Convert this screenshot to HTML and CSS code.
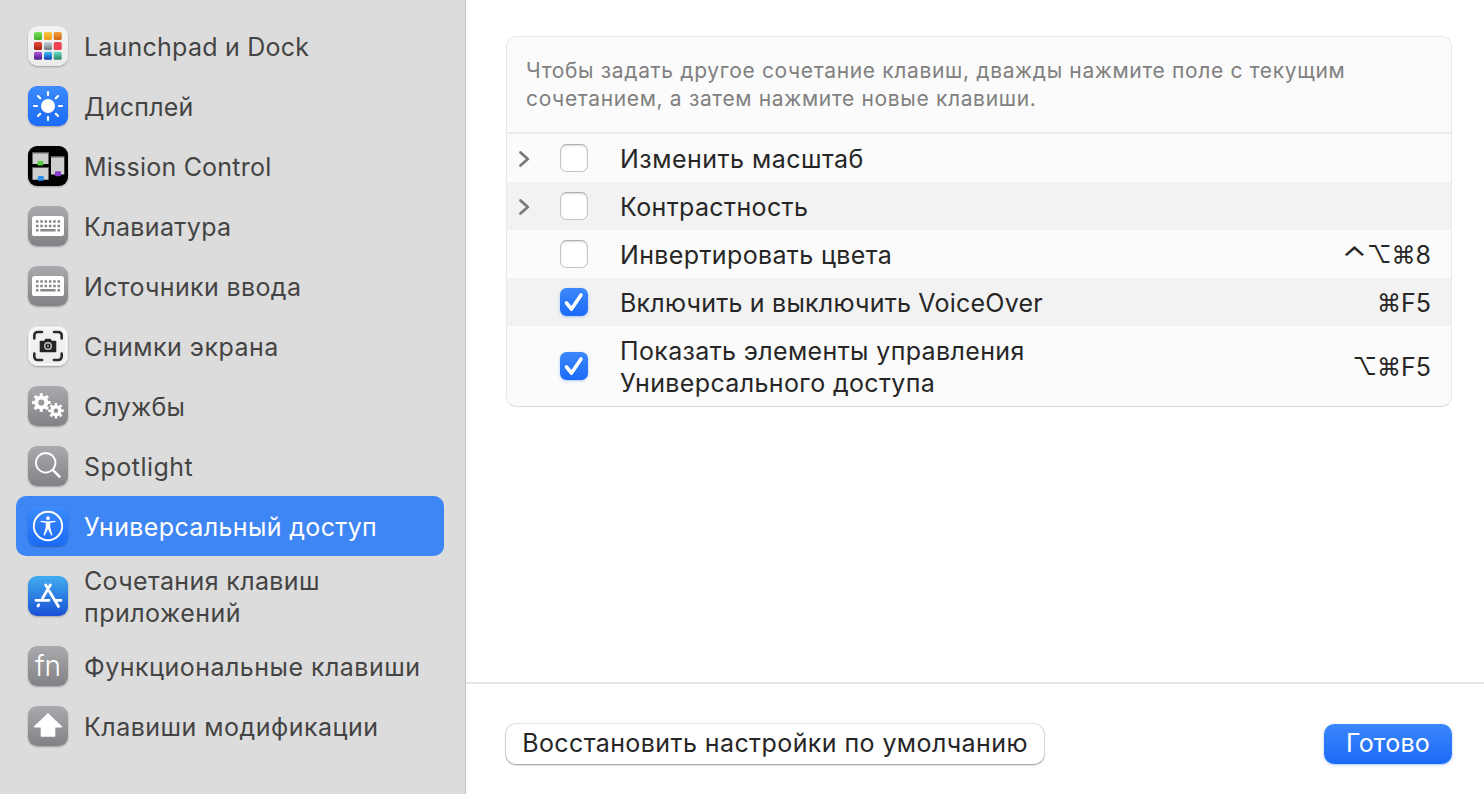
FILE: index.html
```html
<!DOCTYPE html>
<html lang="ru">
<head>
<meta charset="utf-8">
<title>Сочетания клавиш</title>
<link rel="stylesheet" href="styles.css">
</head>
<body>
<div class="window">
  <nav class="sidebar">
    <a class="item"><span class="icon light">
      <svg viewBox="0 0 40 40"><defs>
        <linearGradient id="g1" x2="0" y2="1"><stop stop-color="#7be362"/><stop offset="1" stop-color="#3fae27"/></linearGradient>
        <linearGradient id="g2" x2="0" y2="1"><stop stop-color="#fbc73f"/><stop offset="1" stop-color="#f09a1c"/></linearGradient>
        <linearGradient id="g3" x2="0" y2="1"><stop stop-color="#f2a13a"/><stop offset="1" stop-color="#d4621a"/></linearGradient>
        <linearGradient id="g4" x2="0" y2="1"><stop stop-color="#e94b35"/><stop offset="1" stop-color="#a51f12"/></linearGradient>
        <linearGradient id="g5" x2="0" y2="1"><stop stop-color="#c9d3d8"/><stop offset="1" stop-color="#6f777c"/></linearGradient>
        <linearGradient id="g6" x2="0" y2="1"><stop stop-color="#f2465a"/><stop offset="1" stop-color="#ee3f50"/></linearGradient>
        <linearGradient id="g7" x2="0" y2="1"><stop stop-color="#b158e0"/><stop offset="1" stop-color="#4a1784"/></linearGradient>
        <linearGradient id="g8" x2="0" y2="1"><stop stop-color="#3fc4fb"/><stop offset="1" stop-color="#0b3fae"/></linearGradient>
        <linearGradient id="g9" x2="0" y2="1"><stop stop-color="#66dcc4"/><stop offset="1" stop-color="#2b8262"/></linearGradient></defs>
        <rect x="6" y="6" width="8" height="8" rx="1.5" fill="url(#g1)"/><rect x="16" y="6" width="8" height="8" rx="1.5" fill="url(#g2)"/><rect x="25.7" y="6" width="8" height="8" rx="1.5" fill="url(#g3)"/>
        <rect x="6" y="16" width="8" height="8" rx="1.5" fill="url(#g4)"/><rect x="16" y="16" width="8" height="8" rx="1.5" fill="url(#g5)"/><rect x="25.7" y="16" width="8" height="8" rx="1.5" fill="url(#g6)"/>
        <rect x="6" y="25.8" width="8" height="8" rx="1.5" fill="url(#g7)"/><rect x="16" y="25.8" width="8" height="8" rx="1.5" fill="url(#g8)"/><rect x="25.7" y="25.8" width="8" height="8" rx="1.5" fill="url(#g9)"/>
      </svg></span><span class="label tight">Launchpad и Dock</span></a>
    <a class="item"><span class="icon blue">
      <svg viewBox="0 0 40 40"><circle cx="20" cy="20" r="7" fill="#fff"/><path d="M20 6v3M20 31v3M6 20h3M31 20h3M10.1 10.1l2.1 2.1M27.8 27.8l2.1 2.1M29.9 10.1l-2.1 2.1M12.2 27.8l-2.1 2.1" class="line" stroke-width="2.2"/></svg></span><span class="label tight">Дисплей</span></a>
    <a class="item"><span class="icon black">
      <svg viewBox="0 0 40 40"><path fill="#5a5a5a" d="M4 6h17v1H4zM4 21h17v1H4zM22.500 10h14v1h-14z"/><path fill="#cfcfcf" d="M4.500 7.300h16v10.700h-16zM4.500 22h16v11.700h-16zM23 11.300h13.300v17.200H23z"/><rect x="9.300" y="15" width="6" height="4.500" rx="1" fill="#54cf41"/><rect x="9.800" y="30" width="6" height="4.700" rx="1" fill="#2f8ff0"/><rect x="27" y="25.300" width="6" height="5" rx="1" fill="#8a3fd0"/></svg></span><span class="label tight">Mission Control</span></a>
    <a class="item"><span class="icon gray">
      <svg viewBox="0 0 40 40"><rect x="4" y="10" width="32" height="20" rx="2.600" fill="#fff"/><path d="M8 15.600h24M8 20h24" stroke="#88878c" stroke-width="2.500" stroke-dasharray="2.500 1.800"/><path d="M8 24.200h2.500M12.300 24.200h15.300M29.500 24.200h2.500" stroke="#88878c" stroke-width="2.500"/></svg></span><span class="label">Клавиатура</span></a>
    <a class="item"><span class="icon gray">
      <svg viewBox="0 0 40 40"><rect x="4" y="10" width="32" height="20" rx="2.600" fill="#fff"/><path d="M8 15.600h24M8 20h24" stroke="#88878c" stroke-width="2.500" stroke-dasharray="2.500 1.800"/><path d="M8 24.200h2.500M12.300 24.200h15.300M29.500 24.200h2.500" stroke="#88878c" stroke-width="2.500"/></svg></span><span class="label">Источники ввода</span></a>
    <a class="item"><span class="icon light rim">
      <svg viewBox="0 0 40 40"><g fill="none" stroke="#2b2b2b" stroke-width="2.600" stroke-linecap="round"><path d="M6.300 12.500V9.500a3.500 3.500 0 0 1 3.500-3.500H14M26 6h4.200a3.500 3.500 0 0 1 3.500 3.500v3M33.700 27.500v3a3.500 3.500 0 0 1-3.500 3.500H26M14 34H9.800a3.500 3.500 0 0 1-3.500-3.500v-3"/></g><path fill="#242424" d="M12.500 14.800h3.700l1.200-2h5.200l1.200 2h3.700q.8 0 .8.800v9.800q0 .8-.8.800h-15q-.8 0-.8-.8v-9.800q0-.8.800-.8z"/><circle cx="20" cy="20" r="3.300" fill="#222" stroke="#c6c6c6" stroke-width="1.400"/><circle cx="20" cy="20" r="1.200" fill="#888"/></svg></span><span class="label wide">Снимки экрана</span></a>
    <a class="item"><span class="icon gray">
      <svg viewBox="0 0 40 40"><g fill="none" stroke="#fff"><circle cx="13.300" cy="16.500" r="5.100" stroke-width="4"/><circle cx="13.300" cy="16.500" r="7.900" stroke-width="2.800" pathLength="16" stroke-dasharray="1 1" stroke-dashoffset=".5"/><circle cx="28" cy="24.700" r="4" stroke-width="3.400"/><circle cx="28" cy="24.700" r="6.500" stroke-width="2.600" pathLength="16" stroke-dasharray="1 1" stroke-dashoffset=".5"/></g></svg></span><span class="label tight">Службы</span></a>
    <a class="item"><span class="icon gray">
      <svg viewBox="0 0 40 40"><circle cx="17.700" cy="16.800" r="9.800" class="line" stroke-width="1.800"/><path d="M25 24.200l6.500 6.500" class="line" stroke-width="2.500"/></svg></span><span class="label wide">Spotlight</span></a>
    <a class="item selected"><span class="icon blue">
      <svg viewBox="0 0 40 40"><circle cx="20" cy="20" r="14.200" class="line" stroke-width="1.900"/><circle cx="20" cy="12.200" r="1.900" fill="#fff"/><path fill="#fff" d="M13.200 14.700q-.8-.1-.8.600 0 .5.700.7l4.700 1q.3 3.300-.5 6.200l-1.600 5.300q-.2.800.4 1 .6.200.9-.5L20 23l3 6q.3.700.9.500.6-.2.400-1l-1.600-5.300q-.8-2.900-.5-6.200l4.700-1q.7-.2.700-.7 0-.7-.8-.6l-4.300.5q-2.500.3-5 0z"/></svg></span><span class="label">Универсальный доступ</span></a>
    <a class="item tall"><span class="icon store">
      <svg viewBox="0 0 40 40"><g class="line" stroke-width="2.800"><path d="M22.300 9L14.500 22.300M17.700 9l2 3.300M21.500 15.500L30.500 30.500M8 24.300h13M26.500 24.300h6.500M10.800 28.800l-.8 1.300"/></g></svg></span><span class="label">Сочетания клавиш<br><span class="wide">приложений</span></span></a>
    <a class="item"><span class="icon gray fn">fn</span><span class="label wide">Функциональные клавиши</span></a>
    <a class="item"><span class="icon gray">
      <svg viewBox="0 0 40 40"><path fill="#fff" stroke="#fff" stroke-width="1.600" stroke-linejoin="round" d="M20 8L33.300 20.800H26.500V30H13.500V20.800H6.700z"/></svg></span><span class="label wide">Клавиши модификации</span></a>
  </nav>
  <main class="main">
    <section class="content">
      <div class="panel">
        <p class="hint">Чтобы задать другое сочетание клавиш, дважды нажмите поле с текущим<br>сочетанием, а затем нажмите новые клавиши.</p>
        <div class="row"><svg class="chevron" viewBox="0 0 12 18"><path d="M2.500 2.500l7.300 6.500-7.300 6.500"/></svg><span class="check"></span><span class="name wide">Изменить масштаб</span></div>
        <div class="row alt"><svg class="chevron" viewBox="0 0 12 18"><path d="M2.500 2.500l7.300 6.500-7.300 6.500"/></svg><span class="check"></span><span class="name">Контрастность</span></div>
        <div class="row"><span class="chevron"></span><span class="check"></span><span class="name">Инвертировать цвета</span><span class="keys"><i class="ctrl">⌃</i><i>⌥</i><i>⌘</i>8</span></div>
        <div class="row alt"><span class="chevron"></span><span class="check on"><svg viewBox="0 0 28 28"><path d="M6.500 15l5 6L21 7"/></svg></span><span class="name tight">Включить и выключить VoiceOver</span><span class="keys"><i>⌘</i>F5</span></div>
        <div class="row double"><span class="chevron"></span><span class="check on"><svg viewBox="0 0 28 28"><path d="M6.500 15l5 6L21 7"/></svg></span><span class="name">Показать элементы управления<br>Универсального доступа</span><span class="keys"><i>⌥</i><i>⌘</i>F5</span></div>
      </div>
    </section>
    <footer class="footer">
      <button class="btn">Восстановить настройки по умолчанию</button>
      <button class="btn primary">Готово</button>
    </footer>
  </main>
</div>
</body>
</html>
```
FILE: styles.css
```css
* { box-sizing: border-box; }
body {
  margin: 0;
  font-family: Inter, "Liberation Sans", sans-serif;
  font-size: 25px;
  font-weight: 430;
  line-height: 32px;
  letter-spacing: .36px;
  color: #262626;
  background: #fff;
}
.tight { letter-spacing: .22px; }
.wide { letter-spacing: .48px; }
.window { display: flex; width: 1484px; height: 794px; overflow: hidden; }
.sidebar {
  width: 466px;
  flex: none;
  padding: 16px 21px 0 16px;
  background: #dcdcdc;
  border-right: 1px solid #c2c2c2;
}
.item {
  display: flex;
  align-items: center;
  gap: 16px;
  height: 60px;
  padding-left: 12px;
  border-radius: 10px;
  color: #444;
  white-space: nowrap;
}
.item.tall { height: 80px; }
.item.selected { background: #3f86f5; color: #fff; }
.label { padding-top: 2px; }
.icon {
  flex: none;
  width: 40px;
  height: 40px;
  border-radius: 9px;
  box-shadow: 0 1px 2px rgba(0, 0, 0, .28);
}
.icon svg { display: block; width: 40px; height: 40px; }
.line { fill: none; stroke: #fff; stroke-linecap: round; stroke-linejoin: round; }
.light { background: linear-gradient(#f4f4f4, #ebebeb); border-radius: 10px; }
.rim { box-shadow: 0 1px 2px rgba(0, 0, 0, .3), inset 0 0 0 1px #e6e6e6, inset 0 0 0 2.500px #fbfbfb; }
.blue { background: linear-gradient(#3d8bfb, #1b6bf8); }
.black { background: #000; }
.gray { background: linear-gradient(#aaa9ad, #828186); }
.store { background: linear-gradient(#40acf0, #1a51d6); }
.fn { color: #fff; font-size: 28px; font-weight: 350; line-height: 40px; text-align: center; letter-spacing: 0; }

.main { flex: 1; display: flex; flex-direction: column; }
.content { flex: 1; padding: 36px 32px 0 40px; }
.panel {
  border: 1px solid #e8e8e8;
  border-bottom-color: #d9d9d9;
  border-radius: 10px;
  background: #fbfbfb;
  overflow: hidden;
}
.hint {
  height: 97px;
  margin: 0;
  padding: 20px 19px 0;
  border-bottom: 2px solid #ececec;
  font-size: 21px;
  line-height: 28px;
  letter-spacing: .66px;
  color: #808080;
  white-space: nowrap;
}
.row {
  display: flex;
  align-items: center;
  height: 48px;
  padding: 0 20px 0 11px;
  white-space: nowrap;
}
.row.alt { background: #f2f2f2; }
.row.double { height: 80px; }
.chevron { width: 12px; height: 18px; margin-right: 30px; flex: none; margin-top: 2px; }
.chevron path { fill: none; stroke: #7b7b7b; stroke-width: 2.800px; stroke-linecap: round; stroke-linejoin: round; }
.check {
  width: 28px;
  height: 28px;
  flex: none;
  border: 1px solid #c4c4c4;
  border-top-color: #b0b0b0;
  border-radius: 6.500px;
  background: #fff;
  box-shadow: inset 0 1px 2px rgba(0, 0, 0, .15);
}
.check.on {
  border: 0;
  background: linear-gradient(#3c88fb, #1b6af8);
  box-shadow: 0 1px 3px rgba(27, 106, 248, .35);
}
.check svg { display: block; }
.check path { fill: none; stroke: #fff; stroke-width: 3.600px; stroke-linecap: round; stroke-linejoin: round; }
.name { flex: 1; margin-left: 32px; padding-top: 2px; }
.keys { display: flex; padding-top: 2px; letter-spacing: 0; }
.keys i { font-style: normal; font-size: 24px; }
.keys .ctrl { transform: scale(1.350, 1.200); transform-origin: 50% 20%; margin-right: 3px; }

.footer {
  display: flex;
  justify-content: space-between;
  align-items: flex-start;
  height: 112px;
  padding: 40px 32px 0 40px;
  border-top: 2px solid #e5e5e5;
}
.btn {
  height: 40px;
  width: 538px;
  padding: 0 0 2px;
  border: 0;
  border-radius: 10px;
  background: #fff;
  color: #262626;
  font: inherit;
  letter-spacing: .41px;
  white-space: nowrap;
  box-shadow: 0 0 0 1px rgba(0, 0, 0, .09), 0 1px 2px rgba(0, 0, 0, .35);
}
.primary {
  width: 128px;
  background: linear-gradient(#3b87fb, #1b6af8);
  color: #fff;
  letter-spacing: .2px;
  box-shadow: 0 1px 3px rgba(27, 106, 248, .35);
}
```
